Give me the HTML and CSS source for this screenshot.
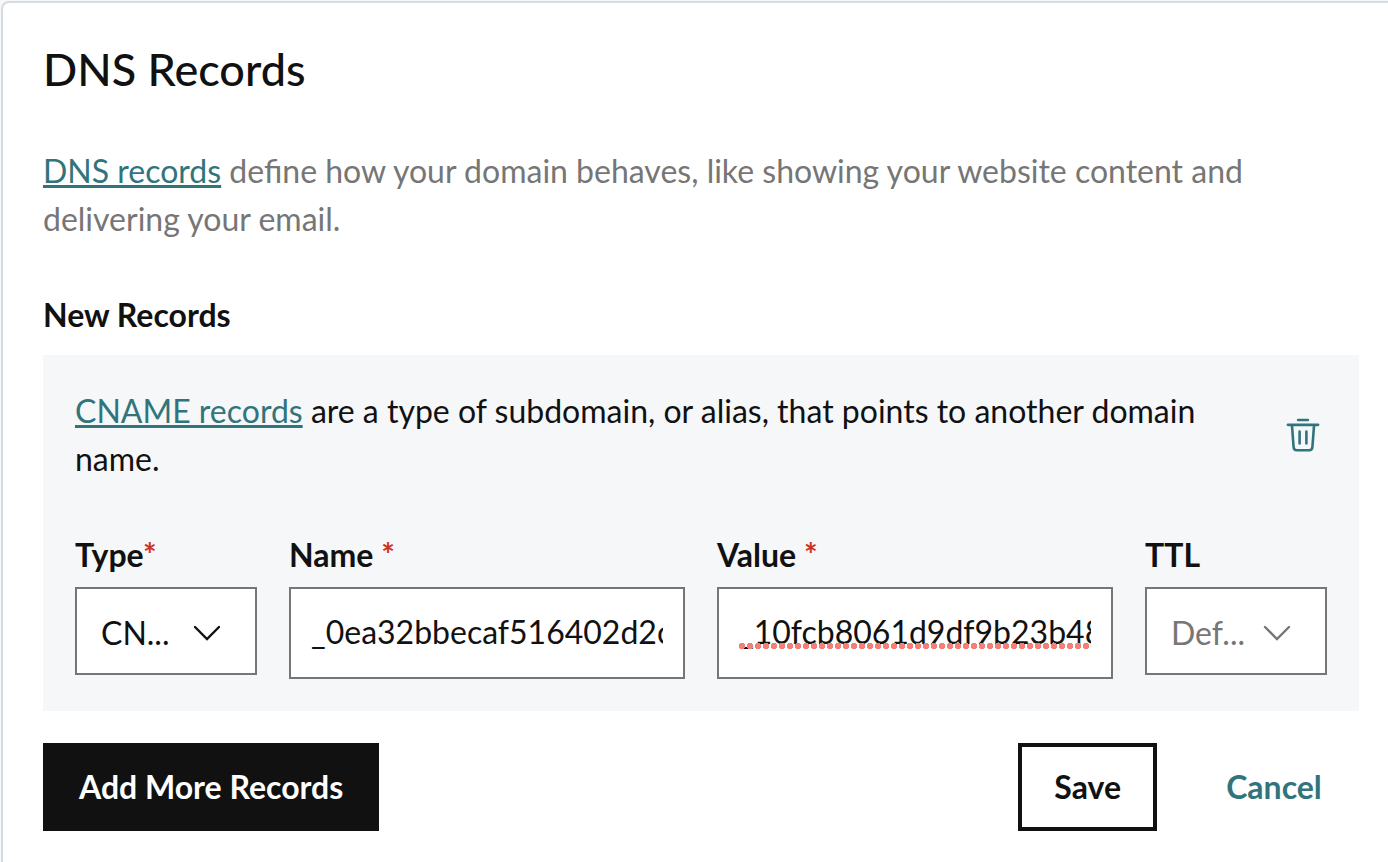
FILE: index.html
```
<!DOCTYPE html>
<html lang="en">
<head>
  <meta charset="UTF-8">
  <meta name="viewport" content="width=device-width, initial-scale=1.0">
  <title>DNS Records</title>
  <link rel="stylesheet" href="styles.css">
</head>
<body>
<main class="card">
  <h1>DNS Records</h1>
  <p class="intro"><a href="#">DNS records</a> define how your domain behaves, like showing your website content and delivering your email.</p>

  <form id="recordForm">
    <h2>New Records</h2>
    <div class="record">
      <!-- Record description -->
      <div class="record-header">
        <p><a href="#">CNAME records</a> are a type of subdomain, or alias, that points to another domain name.</p>
        <button type="button" class="delete-button" aria-label="Delete">
          <svg width="40" height="40" viewBox="0 0 40 40" fill="none" stroke="currentColor" stroke-linecap="round">
            <path d="M15 5h10" stroke-width="2.4"/>
            <path d="M5 9.8h30" stroke-width="2.8"/>
            <path d="M9 11l1.600 21.200q.3 3.100 3.200 3.100h12.400q2.900 0 3.200-3.100L31 11" stroke-width="2.6"/>
            <path d="M16.600 16.500v12M23.400 16.500v12" stroke-width="2.6"/>
          </svg>
        </button>
      </div>

      <!-- Record fields -->
      <div class="fields">
        <div class="field field-small">
          <label for="type">Type<span class="required">*</span></label>
          <div class="select-wrap">
            <select id="type" name="type">
              <option value="CNAME">CN...</option>
            </select>
            <svg class="chevron" width="28" height="16" viewBox="0 0 28 16" fill="none" stroke="currentColor" stroke-width="2.4" stroke-linecap="round"><path d="M2 2l12 12L26 2"/></svg>
          </div>
        </div>
        <div class="field field-large">
          <label for="name">Name <span class="required">*</span></label>
          <input type="text" id="name" name="name" value="_0ea32bbecaf516402d2c6" spellcheck="false" required>
        </div>
        <div class="field field-large">
          <label for="value">Value <span class="required">*</span></label>
          <div class="spelling">
            <input type="text" id="value" name="value" value="_10fcb8061d9df9b23b486" spellcheck="false" required>
          </div>
        </div>
        <div class="field field-small">
          <label for="ttl">TTL</label>
          <div class="select-wrap placeholder">
            <select id="ttl" name="ttl">
              <option value="">Def...</option>
            </select>
            <svg class="chevron" width="28" height="16" viewBox="0 0 28 16" fill="none" stroke="currentColor" stroke-width="2.4" stroke-linecap="round"><path d="M2 2l12 12L26 2"/></svg>
          </div>
        </div>
      </div>
    </div>

    <div class="actions">
      <button type="button" class="button button-primary">Add More Records</button>
      <button type="submit" class="button button-save">Save</button>
      <button type="button" class="button button-cancel">Cancel</button>
    </div>
  </form>
</main>
</body>
</html>
```
FILE: styles.css
```
* {
  box-sizing: border-box;
}
body {
  margin: 0;
  padding: 1px 0 0 1px;
  background: #f5f7f8;
  color: #111;
  font-family: Lato, "Liberation Sans", sans-serif;
  font-size: 32px;
  line-height: 48px;
}
.card {
  min-height: calc(100vh - 1px);
  padding: 40px 29px 31px 40px;
  background: #fff;
  border: 2px solid #d6dbdf;
  border-right: 0;
  border-bottom: 0;
  border-top-left-radius: 8px;
}
h1 {
  margin: 0 0 52px;
  font-size: 45px;
  font-weight: 500;
  line-height: 52px;
}
h2 {
  margin: 0 0 16px;
  font-size: 32px;
  font-weight: 700;
}
p {
  margin: 0;
}
a {
  color: #31747b;
  text-decoration: underline;
  text-decoration-thickness: 3px;
  text-underline-offset: 2px;
  text-decoration-skip-ink: none;
}
.intro {
  margin-bottom: 48px;
  color: #767676;
}
.record {
  padding: 32px;
  background: #f5f7f9;
}
.record-header {
  display: flex;
  align-items: center;
  justify-content: space-between;
  gap: 48px;
  margin-bottom: 48px;
}
.delete-button {
  display: flex;
  flex: none;
  margin-right: 4px;
  padding: 0;
  background: none;
  border: 0;
  color: #31747b;
}
.fields {
  display: grid;
  grid-template-columns: repeat(12, minmax(0, 1fr));
  align-items: start;
  gap: 32px;
}
.field-small {
  grid-column: span 2;
}
.field-large {
  grid-column: span 4;
}
label {
  display: block;
  margin-bottom: 8px;
  font-weight: 700;
}
.required {
  color: #d0311d;
}
input, select {
  display: block;
  width: 100%;
  height: 92px;
  padding: 0 20px 4px;
  background: #fff;
  border: 2px solid #767676;
  border-radius: 0;
  color: #111;
  font: inherit;
}
select {
  height: 88px;
  padding: 4px 20px 0 24px;
  appearance: none;
}
.select-wrap, .spelling {
  position: relative;
}
.placeholder, .placeholder select {
  color: #767676;
}
.chevron {
  position: absolute;
  top: 38px;
  right: 36px;
  pointer-events: none;
}
/* Dots under a misspelled value */
.spelling::after {
  content: "";
  position: absolute;
  right: 22px;
  bottom: 30px;
  left: 22px;
  height: 6px;
  background: radial-gradient(circle at 3px 3px, #f37f77 0 2px, #f37f77 3px, transparent 3px) 0 0 / 8px 6px;
  pointer-events: none;
}
.actions {
  display: flex;
  gap: 32px;
  margin-top: 32px;
}
.button {
  height: 88px;
  padding: 0 32px;
  background: none;
  border: 4px solid transparent;
  font: inherit;
  font-weight: 700;
}
.button-primary {
  margin-right: auto;
  background: #111;
  border-color: #111;
  color: #fff;
}
.button-save {
  border-color: #111;
  color: #111;
}
.button-cancel {
  min-width: 170px;
  color: #31747b;
}
```
